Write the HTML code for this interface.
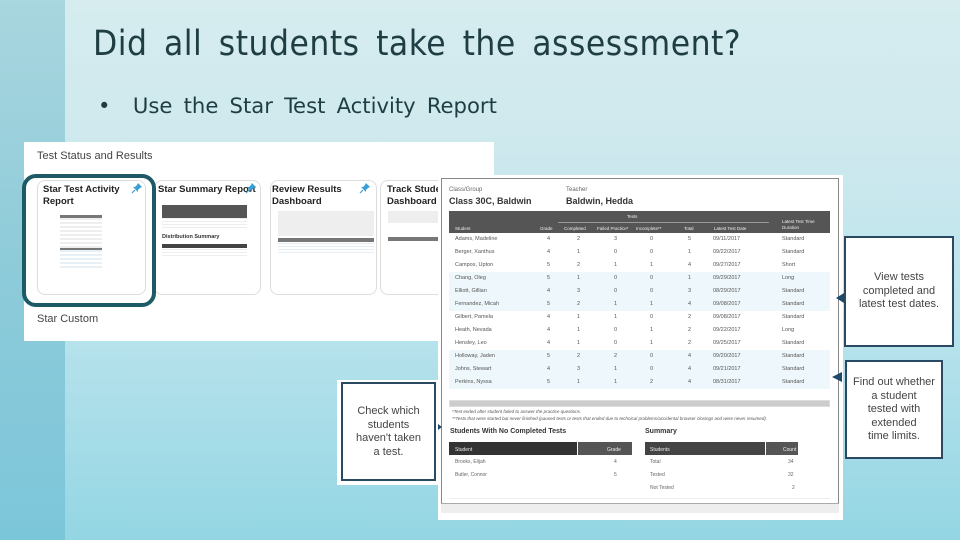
<!DOCTYPE html>
<html><head><meta charset="utf-8"><style>
*{margin:0;padding:0;box-sizing:border-box}
body{width:960px;height:540px;overflow:hidden;position:relative;font-family:"Liberation Sans",sans-serif;
background:linear-gradient(180deg,#d6ecef 0%,#cfe9ee 25%,#b9e3ec 60%,#94d6e4 100%)}
.strip{position:absolute;left:0;top:0;width:65px;height:540px;background:linear-gradient(180deg,#a9d6df,#8dcbd9 50%,#7cc6da)}
.a{position:absolute;white-space:nowrap}
h1{position:absolute;left:93px;top:24px;font-family:"DejaVu Sans Condensed","Liberation Sans Narrow",sans-serif;font-weight:normal;font-size:35px;color:#1f3e44;letter-spacing:0.5px;word-spacing:6px;transform:scaleX(1.0);transform-origin:left;white-space:nowrap}
.bul{position:absolute;left:98px;top:94px;font-family:"DejaVu Sans Condensed",sans-serif;font-size:21px;color:#1f3e44;word-spacing:4px;transform:scaleX(1.12);transform-origin:left;white-space:nowrap}
.card{position:absolute;top:180px;height:115px;border:1px solid #ddd;border-radius:8px;background:#fff}
.ct{position:absolute;font-size:9.5px;font-weight:bold;color:#222;line-height:12px}
.pin{position:absolute;width:12px;height:12px}
.call{position:absolute;background:#fff;border:2px solid #2a4a63;font-size:11px;color:#444;text-align:center;display:flex;align-items:center;justify-content:center;line-height:13.5px}
</style></head><body>
<div class="strip"></div>
<h1>Did all students take the assessment?</h1>
<div class="bul">•&nbsp; Use the Star Test Activity Report</div>

<!-- left panel -->
<div class="a" style="left:24px;top:142px;width:470px;height:199px;background:#fff"></div>
<div class="a" style="left:37px;top:150px;font-size:11px;color:#444">Test Status and Results</div>
<div class="a" style="left:37px;top:313px;font-size:11px;color:#444">Star Custom</div>
<div class="card" style="left:37px;width:109px"></div>
<div class="card" style="left:154px;width:107px"></div>
<div class="card" style="left:270px;width:107px"></div>
<div class="card" style="left:380px;width:114px;border-right:none;border-radius:8px 0 0 8px"></div>
<div class="a" style="left:22px;top:174px;width:134px;height:133px;border:4px solid #1d5a66;border-radius:14px"></div>
<div class="ct" style="left:43px;top:184px">Star Test Activity<br>Report</div>
<svg class="pin" style="left:131px;top:182px" viewBox="0 0 12 12"><path d="M7 1l4 4-2 1-2 2 0 2-5-5 2 0 2-2z" fill="#3a9fd6"/><path d="M4 8L1 11" stroke="#3a9fd6" stroke-width="1.2"/></svg>
<div class="ct" style="left:158px;top:184px">Star Summary Report</div>
<svg class="pin" style="left:245px;top:182px" viewBox="0 0 12 12"><path d="M7 1l4 4-2 1-2 2 0 2-5-5 2 0 2-2z" fill="#3a9fd6"/><path d="M4 8L1 11" stroke="#3a9fd6" stroke-width="1.2"/></svg>
<div class="ct" style="left:272px;top:184px">Review Results<br>Dashboard</div>
<svg class="pin" style="left:359px;top:182px" viewBox="0 0 12 12"><path d="M7 1l4 4-2 1-2 2 0 2-5-5 2 0 2-2z" fill="#3a9fd6"/><path d="M4 8L1 11" stroke="#3a9fd6" stroke-width="1.2"/></svg>
<div class="ct" style="left:387px;top:184px">Track Studen<br>Dashboard</div>
<!-- thumbnails -->
<div class="a" style="left:60px;top:215px;width:42px;height:44px;background:repeating-linear-gradient(180deg,#eee 0 2px,#fff 2px 4px);border-top:3px solid #777"></div>
<div class="a" style="left:60px;top:248px;width:42px;height:20px;background:repeating-linear-gradient(180deg,#e6f0f5 0 2px,#fff 2px 4px);border-top:2px solid #777"></div>
<div class="a" style="left:162px;top:205px;width:85px;height:13px;background:#555"></div>
<div class="a" style="left:162px;top:218px;width:85px;height:10px;background:repeating-linear-gradient(180deg,#eee 0 1px,#fff 1px 3px)"></div>
<div class="a" style="left:162px;top:234px;font-size:5.5px;font-weight:bold;color:#333">Distribution Summary</div>
<div class="a" style="left:162px;top:244px;width:85px;height:4px;background:#444"></div>
<div class="a" style="left:162px;top:249px;width:85px;height:8px;background:repeating-linear-gradient(180deg,#eee 0 1px,#fff 1px 3px)"></div>
<div class="a" style="left:278px;top:211px;width:96px;height:25px;background:#eee"></div>
<div class="a" style="left:278px;top:238px;width:96px;height:4px;background:#777"></div>
<div class="a" style="left:278px;top:243px;width:96px;height:10px;background:repeating-linear-gradient(180deg,#e6eef5 0 1px,#fff 1px 3px)"></div>
<div class="a" style="left:388px;top:211px;width:106px;height:12px;background:#eee"></div>
<div class="a" style="left:388px;top:237px;width:106px;height:4px;background:#777"></div>

<!-- report panel -->
<div class="a" style="left:438px;top:175px;width:405px;height:345px;background:#fff"></div>
<div class="a" style="left:441px;top:178px;width:398px;height:335px;border:1px solid #888;background:#fff"></div>
<div class="a" style="left:441px;top:503px;width:398px;height:10px;background:#eee;border-top:1px solid #aaa"></div>
<div class="a" style="left:449px;top:187px;font-size:6px;color:#666">Class/Group</div>
<div class="a" style="left:449px;top:196px;font-size:9px;font-weight:bold;color:#333">Class 30C, Baldwin</div>
<div class="a" style="left:566px;top:187px;font-size:6px;color:#666">Teacher</div>
<div class="a" style="left:566px;top:196px;font-size:9px;font-weight:bold;color:#333">Baldwin, Hedda</div>
<div class="a" style="left:449px;top:211px;width:381px;height:22px;background:#555"></div>
<div class="a" style="left:558px;top:222px;width:211px;height:1px;background:#999"></div>
<div class="a" style="font-size:4.5px;color:#eee;left:627px;top:214px">Tests</div>
<div class="a" style="font-size:4.5px;color:#eee;left:455px;top:226px">Student</div>
<div class="a" style="font-size:4.5px;color:#eee;left:540px;top:226px">Grade</div>
<div class="a" style="font-size:4.5px;color:#eee;left:564px;top:226px">Completed</div>
<div class="a" style="font-size:4.5px;color:#eee;left:597px;top:226px">Failed Practice*</div>
<div class="a" style="font-size:4.5px;color:#eee;left:636px;top:226px">Incomplete**</div>
<div class="a" style="font-size:4.5px;color:#eee;left:684px;top:226px">Total</div>
<div class="a" style="font-size:4.5px;color:#eee;left:714px;top:226px">Latest Test Date</div>
<div class="a" style="font-size:4.5px;color:#eee;left:782px;top:219px;line-height:6px">Latest Test Time<br>Duration</div>

<div class="a" style="left:449px;top:272px;width:381px;height:39px;background:#eef7fb"></div>
<div class="a" style="left:449px;top:350px;width:381px;height:39px;background:#eef7fb"></div>

<div class="a" style="left:0;top:0;font-size:5.5px;color:#555">
<div class="a" style="left:455px;top:236px">Adams, Madeline</div><div class="a" style="left:547px;top:236px">4</div><div class="a" style="left:577px;top:236px">2</div><div class="a" style="left:614px;top:236px">3</div><div class="a" style="left:650px;top:236px">0</div><div class="a" style="left:688px;top:236px">5</div><div class="a" style="left:713px;top:236px">09/11/2017</div><div class="a" style="left:782px;top:236px">Standard</div>
<div class="a" style="left:455px;top:249px">Berger, Xanthus</div><div class="a" style="left:547px;top:249px">4</div><div class="a" style="left:577px;top:249px">1</div><div class="a" style="left:614px;top:249px">0</div><div class="a" style="left:650px;top:249px">0</div><div class="a" style="left:688px;top:249px">1</div><div class="a" style="left:713px;top:249px">09/22/2017</div><div class="a" style="left:782px;top:249px">Standard</div>
<div class="a" style="left:455px;top:262px">Campos, Upton</div><div class="a" style="left:547px;top:262px">5</div><div class="a" style="left:577px;top:262px">2</div><div class="a" style="left:614px;top:262px">1</div><div class="a" style="left:650px;top:262px">1</div><div class="a" style="left:688px;top:262px">4</div><div class="a" style="left:713px;top:262px">09/27/2017</div><div class="a" style="left:782px;top:262px">Short</div>
<div class="a" style="left:455px;top:275px">Chang, Oleg</div><div class="a" style="left:547px;top:275px">5</div><div class="a" style="left:577px;top:275px">1</div><div class="a" style="left:614px;top:275px">0</div><div class="a" style="left:650px;top:275px">0</div><div class="a" style="left:688px;top:275px">1</div><div class="a" style="left:713px;top:275px">09/29/2017</div><div class="a" style="left:782px;top:275px">Long</div>
<div class="a" style="left:455px;top:288px">Elliott, Gillian</div><div class="a" style="left:547px;top:288px">4</div><div class="a" style="left:577px;top:288px">3</div><div class="a" style="left:614px;top:288px">0</div><div class="a" style="left:650px;top:288px">0</div><div class="a" style="left:688px;top:288px">3</div><div class="a" style="left:713px;top:288px">08/29/2017</div><div class="a" style="left:782px;top:288px">Standard</div>
<div class="a" style="left:455px;top:301px">Fernandez, Micah</div><div class="a" style="left:547px;top:301px">5</div><div class="a" style="left:577px;top:301px">2</div><div class="a" style="left:614px;top:301px">1</div><div class="a" style="left:650px;top:301px">1</div><div class="a" style="left:688px;top:301px">4</div><div class="a" style="left:713px;top:301px">09/08/2017</div><div class="a" style="left:782px;top:301px">Standard</div>
<div class="a" style="left:455px;top:314px">Gilbert, Pamela</div><div class="a" style="left:547px;top:314px">4</div><div class="a" style="left:577px;top:314px">1</div><div class="a" style="left:614px;top:314px">1</div><div class="a" style="left:650px;top:314px">0</div><div class="a" style="left:688px;top:314px">2</div><div class="a" style="left:713px;top:314px">09/08/2017</div><div class="a" style="left:782px;top:314px">Standard</div>
<div class="a" style="left:455px;top:327px">Heath, Nevada</div><div class="a" style="left:547px;top:327px">4</div><div class="a" style="left:577px;top:327px">1</div><div class="a" style="left:614px;top:327px">0</div><div class="a" style="left:650px;top:327px">1</div><div class="a" style="left:688px;top:327px">2</div><div class="a" style="left:713px;top:327px">09/22/2017</div><div class="a" style="left:782px;top:327px">Long</div>
<div class="a" style="left:455px;top:340px">Hensley, Leo</div><div class="a" style="left:547px;top:340px">4</div><div class="a" style="left:577px;top:340px">1</div><div class="a" style="left:614px;top:340px">0</div><div class="a" style="left:650px;top:340px">1</div><div class="a" style="left:688px;top:340px">2</div><div class="a" style="left:713px;top:340px">09/25/2017</div><div class="a" style="left:782px;top:340px">Standard</div>
<div class="a" style="left:455px;top:353px">Holloway, Jaden</div><div class="a" style="left:547px;top:353px">5</div><div class="a" style="left:577px;top:353px">2</div><div class="a" style="left:614px;top:353px">2</div><div class="a" style="left:650px;top:353px">0</div><div class="a" style="left:688px;top:353px">4</div><div class="a" style="left:713px;top:353px">09/20/2017</div><div class="a" style="left:782px;top:353px">Standard</div>
<div class="a" style="left:455px;top:366px">Johns, Stewart</div><div class="a" style="left:547px;top:366px">4</div><div class="a" style="left:577px;top:366px">3</div><div class="a" style="left:614px;top:366px">1</div><div class="a" style="left:650px;top:366px">0</div><div class="a" style="left:688px;top:366px">4</div><div class="a" style="left:713px;top:366px">09/21/2017</div><div class="a" style="left:782px;top:366px">Standard</div>
<div class="a" style="left:455px;top:379px">Perkins, Nyssa</div><div class="a" style="left:547px;top:379px">5</div><div class="a" style="left:577px;top:379px">1</div><div class="a" style="left:614px;top:379px">1</div><div class="a" style="left:650px;top:379px">2</div><div class="a" style="left:688px;top:379px">4</div><div class="a" style="left:713px;top:379px">08/31/2017</div><div class="a" style="left:782px;top:379px">Standard</div>
</div>
<div class="a" style="left:449px;top:400px;width:381px;height:7px;background:#ccc;border:1px solid #ddd"></div>
<div class="a" style="left:452px;top:409px;font-size:4.5px;color:#555;font-style:italic">*Test ended after student failed to answer the practice questions.</div>
<div class="a" style="left:452px;top:416px;font-size:4.5px;color:#555;font-style:italic">**Tests that were started but never finished (paused tests or tests that ended due to technical problems/accidental browser closings and were never resumed).</div>
<div class="a" style="left:450px;top:428px;font-size:7px;font-weight:bold;color:#333">Students With No Completed Tests</div>
<div class="a" style="left:645px;top:428px;font-size:7px;font-weight:bold;color:#333">Summary</div>
<div class="a" style="left:449px;top:442px;width:128px;height:13px;background:#333"></div>
<div class="a" style="left:578px;top:442px;width:54px;height:13px;background:#555"></div>
<div class="a" style="left:645px;top:442px;width:120px;height:13px;background:#444"></div>
<div class="a" style="left:766px;top:442px;width:32px;height:13px;background:#555"></div>
<div class="a" style="left:455px;top:447px;font-size:5px;color:#eee">Student</div>
<div class="a" style="left:607px;top:447px;font-size:5px;color:#eee">Grade</div>
<div class="a" style="left:650px;top:447px;font-size:5px;color:#eee">Students</div>
<div class="a" style="left:783px;top:447px;font-size:5px;color:#eee">Count</div>
<div class="a" style="left:455px;top:459px;font-size:5px;color:#666">Brooks, Elijah</div><div class="a" style="left:614px;top:459px;font-size:5px;color:#666">4</div>
<div class="a" style="left:455px;top:472px;font-size:5px;color:#666">Butler, Connor</div><div class="a" style="left:614px;top:472px;font-size:5px;color:#666">5</div>
<div class="a" style="left:650px;top:459px;font-size:5px;color:#666">Total</div><div class="a" style="left:788px;top:459px;font-size:5px;color:#666">34</div>
<div class="a" style="left:650px;top:472px;font-size:5px;color:#666">Tested</div><div class="a" style="left:788px;top:472px;font-size:5px;color:#666">32</div>
<div class="a" style="left:650px;top:485px;font-size:5px;color:#666">Not Tested</div><div class="a" style="left:792px;top:485px;font-size:5px;color:#666">2</div>
<div class="a" style="left:449px;top:498px;width:381px;height:1px;background:#eee"></div>

<!-- callouts -->
<div class="call" style="left:844px;top:236px;width:110px;height:111px">View tests<br>completed and<br>latest test dates.</div>
<div class="a" style="left:836px;top:293px;width:0;height:0;border-top:5px solid transparent;border-bottom:5px solid transparent;border-right:8px solid #1d4a6a"></div>
<div class="call" style="left:845px;top:360px;width:98px;height:99px;align-items:flex-start;padding-top:14px">Find out whether<br>a student<br>tested with<br>extended<br>time limits.</div>
<div class="a" style="left:832px;top:372px;width:0;height:0;border-top:5px solid transparent;border-bottom:5px solid transparent;border-right:10px solid #1d4a6a"></div>
<div class="a" style="left:337px;top:380px;width:101px;height:105px;background:#fff"></div>
<div class="call" style="left:341px;top:382px;width:95px;height:99px;align-items:flex-start;padding-top:21px">Check which<br>students<br>haven't taken<br>a test.</div>
<div class="a" style="left:438px;top:424px;width:0;height:0;border-top:3px solid transparent;border-bottom:3px solid transparent;border-left:4px solid #1d4a6a"></div>
</body></html>
